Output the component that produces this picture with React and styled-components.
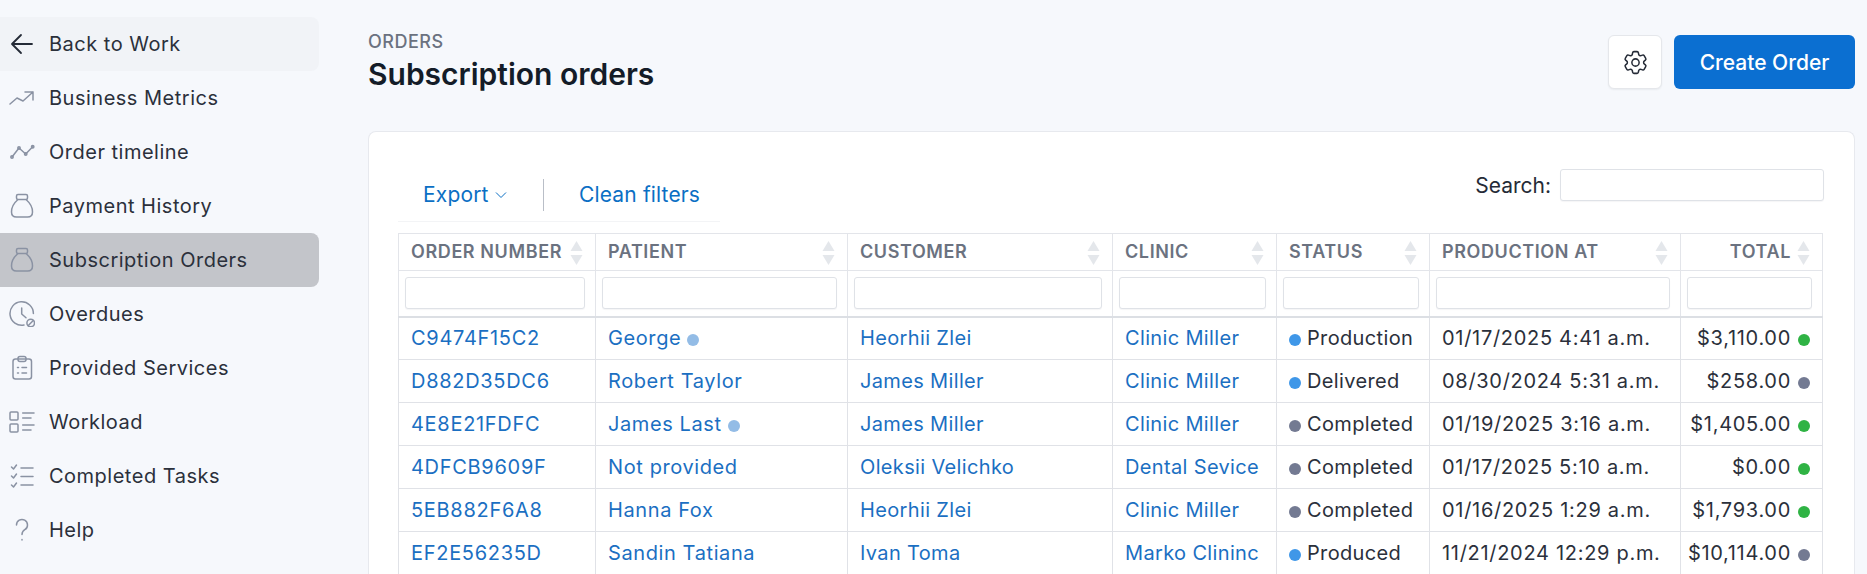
import React from 'react'
import styled, { createGlobalStyle } from 'styled-components'
import { HiOutlineCog6Tooth } from 'react-icons/hi2'

const GlobalStyle = createGlobalStyle`
    html, body {
        margin: 0;
        height: 100%;
        overflow: hidden;
        background: #f6f8fc;
    }
    * {
        box-sizing: border-box;
    }
`;

const Page = styled.div`
    display: flex;
    height: 574px;
    overflow: hidden;
    font-family: Inter, "Liberation Sans", sans-serif;
    color: #252b37;
`;

const Sidebar = styled.nav`
    width: 319px;
    flex-shrink: 0;
    padding-top: 17px;
`;

const NavItem = styled.a`
    display: flex;
    align-items: center;
    height: 54px;
    font-size: 20px;
    letter-spacing: 0.5px;
    color: #2b303b;
    border-radius: 0 8px 8px 0;
    background: ${props => props.$active ? "#c3c5ca" : props.$back ? "#f1f3f7" : "transparent"};
`;

const NavIcon = styled.span`
    width: 49px;
    height: 26px;
    flex-shrink: 0;
    display: flex;
    align-items: center;
    padding-left: 9px;
    svg {
        width: 26px;
        height: 26px;
        fill: none;
        stroke: ${props => props.$dark ? "#252b37" : "#8a92a3"};
        stroke-width: ${props => props.$dark ? 1.8 : 1.5};
        stroke-linecap: round;
        stroke-linejoin: round;
    }
`;

const Main = styled.main`
    flex: 1;
    min-width: 0;
    padding: 0 12px 0 49px;
`;

const Header = styled.header`
    display: flex;
    justify-content: space-between;
    height: 131px;
    padding-top: 32px;
`;

const Overline = styled.div`
    font-size: 18px;
    font-weight: 500;
    letter-spacing: 0.5px;
    line-height: 19px;
    color: #6b7280;
`;

const Title = styled.h1`
    margin: 5px 0 0;
    font-size: 30px;
    font-weight: 600;
    line-height: 36px;
    color: #141c28;
`;

const Actions = styled.div`
    display: flex;
    gap: 12px;
    padding-top: 3px;
    align-items: flex-start;
`;

const SettingsButton = styled.button`
    width: 54px;
    height: 54px;
    padding: 0;
    display: flex;
    align-items: center;
    justify-content: center;
    background: #fff;
    border: 1px solid #e5e7eb;
    border-radius: 6px;
    box-shadow: 0 1px 2px rgba(20, 28, 40, 0.06);
    color: #252b37;
`;

const CreateButton = styled.button`
    width: 181px;
    height: 54px;
    border: none;
    border-radius: 6px;
    background: #0b6fd1;
    color: #fff;
    font-family: inherit;
    font-size: 21px;
    font-weight: 500;
`;

const Card = styled.section`
    background: #fff;
    border: 1px solid #e7e9ee;
    border-bottom: none;
    border-radius: 8px 8px 0 0;
    padding: 0 30px 0 29px;
    height: 500px;
`;

const TableToolbar = styled.div`
    display: flex;
    justify-content: space-between;
    height: 101px;
`;

const ToolGroup = styled.div`
    display: flex;
    align-items: center;
    height: 90px;
    width: 322px;
    padding-top: 36px;
    border-bottom: 1px solid #f3f4f6;
`;

const ToolLink = styled.a`
    color: #0b6fc4;
    font-size: 21px;
    letter-spacing: 0.15px;
    display: flex;
    align-items: center;
    gap: 6px;
`;

const ExportLink = styled(ToolLink)`
    margin-left: 25px;
    width: 120px;
`;

const Divider = styled.span`
    width: 1px;
    height: 32px;
    background: #b9bec7;
    margin-right: 35px;
`;

const SearchBox = styled.label`
    display: flex;
    align-items: center;
    gap: 9px;
    height: 32px;
    margin-top: 37px;
    font-size: 21px;
    color: #252b37;
`;

const SearchInput = styled.input`
    width: 264px;
    height: 32px;
    background: #fff;
    border: 1px solid #dfe2e7;
    border-radius: 3px;
    box-shadow: 0 1px 1px rgba(20, 28, 40, 0.04);
`;

const Table = styled.table`
    width: 1424px;
    table-layout: fixed;
    border-collapse: collapse;
    font-size: 20px;
    letter-spacing: 0.35px;
`;

const HeadCell = styled.th`
    position: relative;
    height: 37px;
    padding: 0 12px 2px;
    padding-right: ${props => props.$right ? "31px" : "12px"};
    border: 1px solid #e3e5ea;
    font-size: 18px;
    font-weight: 600;
    letter-spacing: 0.6px;
    color: #6b7280;
    white-space: nowrap;
    text-align: ${props => props.$right ? "right" : "left"};
    svg {
        position: absolute;
        right: 12px;
        top: 7px;
    }
`;

const FilterCell = styled.th`
    height: 46px;
    padding: 0 10px 0 6px;
    border: 1px solid #e3e5ea;
    border-bottom: 2px solid #dcdfe4;
`;

const FilterInput = styled.input`
    display: block;
    width: 100%;
    height: 32px;
    background: #fff;
    border: 1px solid #dfe2e7;
    border-radius: 3px;
    box-shadow: 0 1px 1px rgba(20, 28, 40, 0.04);
`;

const Cell = styled.td`
    height: 43px;
    padding: 0 12px;
    border: 1px solid #e0e2e7;
    white-space: nowrap;
    color: #2b303b;
    letter-spacing: ${props => props.$spacing || "inherit"};
`;

const TotalCell = styled(Cell)`
    padding-left: 0;
    text-align: right;
`;

const RowLink = styled.a`
    color: #1b6fc2;
`;

const Dot = styled.span`
    display: inline-block;
    width: 12px;
    height: 12px;
    border-radius: 50%;
    background: ${props => props.$color};
    vertical-align: -0.5px;
`;

const PatientDot = styled(Dot)`
    margin-left: 6px;
`;

const StatusDot = styled(Dot)`
    margin-right: 6px;
`;

const TotalDot = styled(Dot)`
    margin-left: 7px;
`;

const BLUE = "#3f97e8";
const GREY = "#737a92";
const GREEN = "#2fb344";

const icons = {
    back: <path d="M23 13H3.500M12 4l-9 9 9 9" />,
    metrics: <path d="M1 19l7-6 6 3 10-9M16 7h8v8" />,
    timeline: <><path d="M3 18l7-9 6.700 6 7-7.300" /><circle cx="3" cy="18" r="1.200" /><circle cx="10" cy="9" r="1.200" /><circle cx="16.700" cy="15" r="1.200" /><circle cx="23.700" cy="7.700" r="1.200" /></>,
    bag: <><rect x="7.500" y="1.500" width="11" height="5" rx="1.500" /><path d="M8.500 7C5 10 2.500 14 2.500 19c0 3 2 5 5 5h11c3 0 5-2 5-5 0-5-2.500-9-6-12" /></>,
    overdue: <><path d="M24.400 12.500A11.700 11.700 0 1 0 15 24" /><path d="M12.700 7v6l4.300 3.700" /><circle cx="21.700" cy="22" r="3.800" /><path d="M19.300 24.500l5-5" /></>,
    services: <><rect x="4" y="4" width="18.500" height="20" rx="2.500" /><rect x="9" y="1.500" width="8" height="5" rx="2" /><path d="M8.500 12.500h1M13 12.500h4.500M8.500 18h1M13 18h4.500" /></>,
    workload: <><rect x="1" y="3" width="8" height="8" rx="1" /><rect x="1" y="15" width="8" height="8" rx="1" /><path d="M13.700 4H25M13.700 9H22M13.700 16H25M13.700 21H22" /></>,
    tasks: <path d="M2.500 4l2 2 3-4M2.500 13l2 2 3-4M2.500 22l2 2 3-4M12 5h12M12 13.500h12M12 22h12" />,
    help: <path d="M7.500 8a5.500 5.500 0 1 1 8.300 4.700c-1.800 1.200-2.800 2.300-2.800 4.800M13 22.500v.5" />,
}

const navItems = [
    { label: "Back to Work", icon: "back", back: true },
    { label: "Business Metrics", icon: "metrics" },
    { label: "Order timeline", icon: "timeline" },
    { label: "Payment History", icon: "bag" },
    { label: "Subscription Orders", icon: "bag", active: true },
    { label: "Overdues", icon: "overdue" },
    { label: "Provided Services", icon: "services" },
    { label: "Workload", icon: "workload" },
    { label: "Completed Tasks", icon: "tasks" },
    { label: "Help", icon: "help" },
];

const columns = [
    { label: "ORDER NUMBER", width: 197 },
    { label: "PATIENT", width: 252 },
    { label: "CUSTOMER", width: 265 },
    { label: "CLINIC", width: 164 },
    { label: "STATUS", width: 153 },
    { label: "PRODUCTION AT", width: 251 },
    { label: "TOTAL", width: 142, right: true },
];

const rows = [
    { id: "C9474F15C2", patient: "George", flagged: true, customer: "Heorhii Zlei", clinic: "Clinic Miller", status: "Production", statusColor: BLUE, date: "01/17/2025 4:41 a.m.", total: "$3,110.00", totalColor: GREEN },
    { id: "D882D35DC6", patient: "Robert Taylor", customer: "James Miller", clinic: "Clinic Miller", status: "Delivered", statusColor: BLUE, date: "08/30/2024 5:31 a.m.", total: "$258.00", totalColor: GREY },
    { id: "4E8E21FDFC", patient: "James Last", flagged: true, customer: "James Miller", clinic: "Clinic Miller", status: "Completed", statusColor: GREY, date: "01/19/2025 3:16 a.m.", total: "$1,405.00", totalColor: GREEN },
    { id: "4DFCB9609F", patient: "Not provided", customer: "Oleksii Velichko", clinic: "Dental Sevice", status: "Completed", statusColor: GREY, date: "01/17/2025 5:10 a.m.", total: "$0.00", totalColor: GREEN },
    { id: "5EB882F6A8", patient: "Hanna Fox", customer: "Heorhii Zlei", clinic: "Clinic Miller", status: "Completed", statusColor: GREY, date: "01/16/2025 1:29 a.m.", total: "$1,793.00", totalColor: GREEN },
    { id: "EF2E56235D", patient: "Sandin Tatiana", customer: "Ivan Toma", clinic: "Marko Clininc", status: "Produced", statusColor: BLUE, date: "11/21/2024 12:29 p.m.", total: "$10,114.00", totalColor: GREY },
];

const SortArrows = () => (
    <svg width="13" height="24" viewBox="0 0 13 24" fill="#e4e7eb">
        <path d="M6.500 0l6 10H.500z" />
        <path d="M6.500 24l6-10H.500z" />
    </svg>
)

const Chevron = () => (
    <svg width="12" height="8" viewBox="0 0 12 8" fill="none" stroke="#0b6fc4" strokeWidth="1">
        <path d="M1 1.500l5 5 5-5" />
    </svg>
)

const App = () => {
    return (
        <Page>
            <GlobalStyle />
            <Sidebar>
                {navItems.map(item => (
                    <NavItem key={item.label} $active={item.active} $back={item.back}>
                        <NavIcon $dark={item.back}>
                            <svg viewBox="0 0 26 26">{icons[item.icon]}</svg>
                        </NavIcon>
                        {item.label}
                    </NavItem>
                ))}
            </Sidebar>
            <Main>
                <Header>
                    <div>
                        <Overline>ORDERS</Overline>
                        <Title>Subscription orders</Title>
                    </div>
                    <Actions>
                        <SettingsButton><HiOutlineCog6Tooth size={29} strokeWidth={1.25} /></SettingsButton>
                        <CreateButton>Create Order</CreateButton>
                    </Actions>
                </Header>
                <Card>
                    <TableToolbar>
                        <ToolGroup>
                            <ExportLink>Export <Chevron /></ExportLink>
                            <Divider />
                            <ToolLink>Clean filters</ToolLink>
                        </ToolGroup>
                        <SearchBox>Search: <SearchInput /></SearchBox>
                    </TableToolbar>
                    <Table>
                        <colgroup>
                            {columns.map(col => <col key={col.label} width={col.width} />)}
                        </colgroup>
                        <thead>
                            <tr>
                                {columns.map(col => (
                                    <HeadCell key={col.label} $right={col.right}>
                                        {col.label}
                                        <SortArrows />
                                    </HeadCell>
                                ))}
                            </tr>
                            <tr>
                                {columns.map(col => (
                                    <FilterCell key={col.label}><FilterInput /></FilterCell>
                                ))}
                            </tr>
                        </thead>
                        <tbody>
                            {rows.map(row => (
                                <tr key={row.id}>
                                    <Cell $spacing="0.7px"><RowLink>{row.id}</RowLink></Cell>
                                    <Cell $spacing="0.6px">
                                        <RowLink>{row.patient}</RowLink>
                                        {row.flagged && <PatientDot $color="#93bce6" />}
                                    </Cell>
                                    <Cell><RowLink>{row.customer}</RowLink></Cell>
                                    <Cell><RowLink>{row.clinic}</RowLink></Cell>
                                    <Cell><StatusDot $color={row.statusColor} />{row.status}</Cell>
                                    <Cell $spacing="0.7px">{row.date}</Cell>
                                    <TotalCell $spacing="0.7px">{row.total}<TotalDot $color={row.totalColor} /></TotalCell>
                                </tr>
                            ))}
                        </tbody>
                    </Table>
                </Card>
            </Main>
        </Page>
    )
}

export default App
